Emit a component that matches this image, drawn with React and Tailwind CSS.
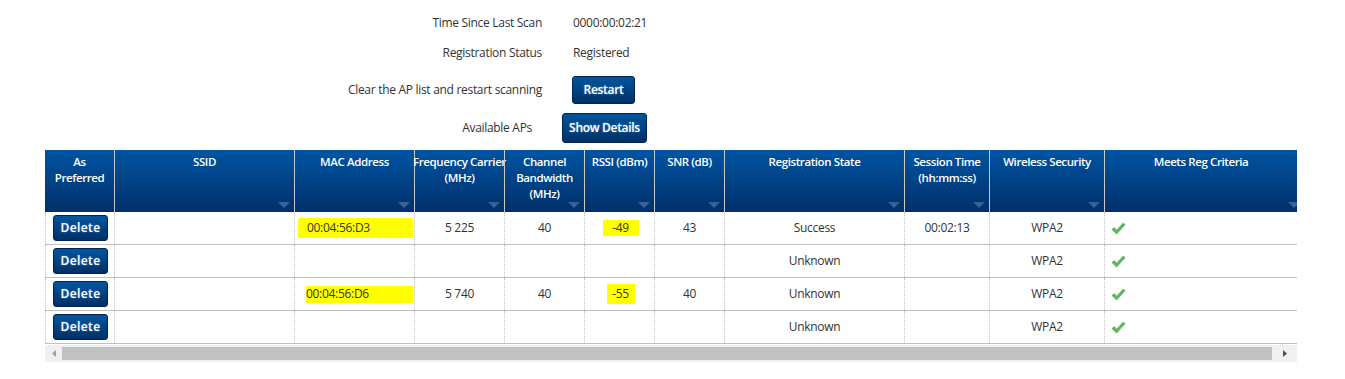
import React from 'react';

const GRID = 'grid grid-cols-[69px_180px_120px_90px_80px_70px_70px_180px_85px_115px_193px]';

const headers = [
    { lines: ['As', 'Preferred'], arrow: false },
    { lines: ['SSID'], arrow: true },
    { lines: ['MAC Address'], arrow: true },
    { lines: ['Frequency Carrier', '(MHz)'], arrow: true },
    { lines: ['Channel', 'Bandwidth', '(MHz)'], arrow: true },
    { lines: ['RSSI (dBm)'], arrow: true },
    { lines: ['SNR (dB)'], arrow: true },
    { lines: ['Registration State'], arrow: true },
    { lines: ['Session Time', '(hh:mm:ss)'], arrow: true },
    { lines: ['Wireless Security'], arrow: true },
    { lines: ['Meets Reg Criteria'], arrow: true, last: true },
];

const rows = [
    { mac: '00:04:56:D3', macHl: 'a', freq: '5 225', bw: '40', rssi: '-49', rssiHl: 'a', snr: '43', state: 'Success', session: '00:02:13' },
    { mac: '', freq: '', bw: '', rssi: '', snr: '', state: 'Unknown', session: '' },
    { mac: '00:04:56:D6', macHl: 'b', freq: '5 740', bw: '40', rssi: '-55', rssiHl: 'b', snr: '40', state: 'Unknown', session: '' },
    { mac: '', freq: '', bw: '', rssi: '', snr: '', state: 'Unknown', session: '' },
];

function BlueButton({ children, className = '' }) {
    return (
        <button
            className={`rounded-[3px] border border-[#00244f] bg-gradient-to-b from-[#00569f] to-[#002f66] text-white font-semibold text-[12px] [text-shadow:0_0_2px_rgba(160,200,255,0.6)] ${className}`}
        >
            {children}
        </button>
    );
}

function Check() {
    return (
        <svg width="15" height="13" viewBox="0 0 15 13">
            <path d="M1 7.5 L3.2 5.6 L5.6 8.2 L12.3 1 L14 2.8 L5.6 12 Z" fill="#5cb85c" stroke="#4a9a4a" strokeWidth="0.6" />
        </svg>
    );
}

function Arrow({ last }) {
    return (
        <svg
            width="12"
            height="6"
            viewBox="0 0 12 6"
            className={`absolute bottom-[4px] ${last ? 'right-[-3px]' : 'right-[4px]'}`}
        >
            <path d="M0 0 L12 0 L6 6 Z" fill="#3a6192" />
        </svg>
    );
}

export default function App() {
    const cell = 'border-l border-dotted border-l-[#c0c0c0] flex items-center text-[12px] text-[#333]';

    return (
        <div className="w-[1345px] h-[379px] bg-white font-['Open_Sans',sans-serif] text-[#333] tracking-[-0.3px] pt-[15px]">
            {/* scan status */}
            <div className="flex flex-col text-[12px]">
                <div className="flex h-[16px] items-center">
                    <div className="w-[542px] text-right">Time Since Last Scan</div>
                    <div className="ml-[31px]">0000:00:02:21</div>
                </div>
                <div className="flex h-[16px] items-center mt-[14px]">
                    <div className="w-[542px] text-right">Registration Status</div>
                    <div className="ml-[31px]">Registered</div>
                </div>
                <div className="flex h-[28px] items-center mt-[15px]">
                    <div className="w-[542px] text-right">Clear the AP list and restart scanning</div>
                    <BlueButton className="ml-[30px] w-[63px] h-[28px]">Restart</BlueButton>
                </div>
                <div className="flex h-[30px] items-center mt-[9px]">
                    <div className="w-[532px] text-right">Available APs</div>
                    <BlueButton className="ml-[30px] w-[85px] h-[30px]">Show Details</BlueButton>
                </div>
            </div>

            {/* AP table */}
            <div className="ml-[45px] mt-[7px] w-[1252px] overflow-hidden">
                <div className={`${GRID} h-[62px] bg-gradient-to-b from-[#0054a3] to-[#00306a]`}>
                    {headers.map((h, i) => (
                        <div
                            key={i}
                            className={`relative flex flex-col items-center pt-[4px] text-white font-semibold text-[11.5px] tracking-[-0.4px] leading-[16px] ${i > 0 ? 'border-l border-[#c8c8c8]' : ''}`}
                        >
                            {h.lines.map((l) => (
                                <div key={l} className="whitespace-nowrap">{l}</div>
                            ))}
                            {h.arrow && <Arrow last={h.last} />}
                        </div>
                    ))}
                </div>

                {rows.map((r, i) => (
                    <div key={i} className={`${GRID} h-[33px] border-b border-[#c0c0c0]`}>
                        <div className={`${cell} justify-center pl-[1px]`}>
                            <BlueButton className="w-[55px] h-[26px] font-bold tracking-[0.4px]">Delete</BlueButton>
                        </div>
                        <div className={cell}></div>
                        <div className={cell}>
                            {r.macHl === 'a' && (
                                <span className="ml-[3px] w-[115px] h-[20px] pl-[9px] flex items-center bg-[#ffff00] rounded-[2px]">{r.mac}</span>
                            )}
                            {r.macHl === 'b' && (
                                <span className="ml-[11px] w-[107px] h-[17px] flex items-center bg-[#ffff00]">{r.mac}</span>
                            )}
                        </div>
                        <div className={`${cell} justify-center`}>{r.freq}</div>
                        <div className={`${cell} justify-center`}>{r.bw}</div>
                        <div className={`${cell} justify-center`}>
                            {r.rssiHl === 'a' && (
                                <span className="w-[36px] h-[16px] ml-[2px] flex items-center justify-center bg-[#ffff00]">{r.rssi}</span>
                            )}
                            {r.rssiHl === 'b' && (
                                <span className="w-[28px] h-[20px] ml-[2px] flex items-center justify-center bg-[#ffff00]">{r.rssi}</span>
                            )}
                        </div>
                        <div className={`${cell} justify-center`}>{r.snr}</div>
                        <div className={`${cell} justify-center`}>{r.state}</div>
                        <div className={`${cell} justify-center`}>{r.session}</div>
                        <div className={`${cell} justify-center`}>WPA2</div>
                        <div className={`${cell} pl-[6px]`}>
                            <Check />
                        </div>
                    </div>
                ))}

                {/* horizontal scrollbar */}
                <div className="mt-[1px] h-[17px] bg-[#f0f0f0] flex items-center">
                    <div className="w-[17px] flex justify-center">
                        <svg width="4" height="7" viewBox="0 0 4 7">
                            <path d="M4 0 L0 3.5 L4 7 Z" fill="#a3a3a3" />
                        </svg>
                    </div>
                    <div className="w-[1210px] h-[13px] bg-[#c1c1c1]"></div>
                    <div className="flex-1 flex justify-center">
                        <svg width="4" height="7" viewBox="0 0 4 7">
                            <path d="M0 0 L4 3.5 L0 7 Z" fill="#505050" />
                        </svg>
                    </div>
                </div>
            </div>
        </div>
    );
}
